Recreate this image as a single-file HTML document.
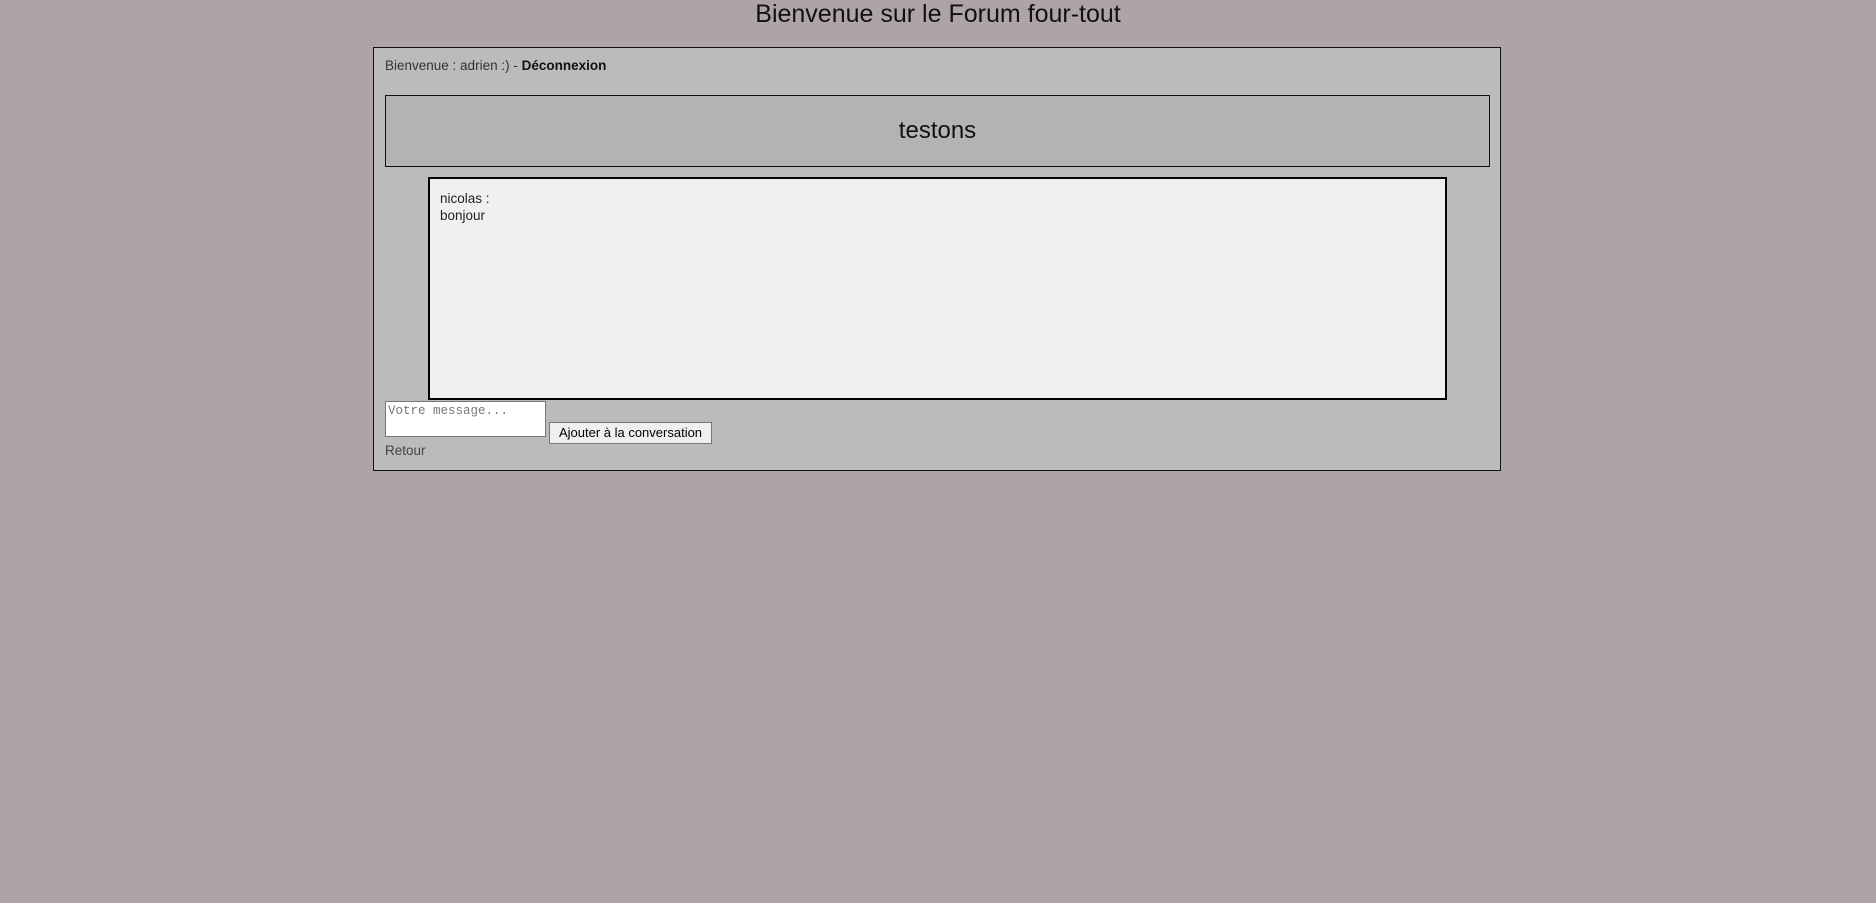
<!DOCTYPE html>
<html><head><meta charset="utf-8"><style>
body{margin:0;background:#aea4a7;font-family:"Liberation Sans",sans-serif;width:1876px;height:903px;position:relative;overflow:hidden}
.a{position:absolute}
h1{position:absolute;left:0;width:1876px;top:-1px;margin:0;text-align:center;font-size:25px;font-weight:normal;color:#111;line-height:30px}
#c{left:373px;top:47px;width:1126px;height:422px;border:1px solid #111;background:#bbbbbb}
</style></head><body>
<h1>Bienvenue sur le Forum four-tout</h1>
<div id="c" class="a"></div>
<div class="a" style="left:385px;top:58px;font-size:13.5px;color:#333">Bienvenue : adrien :) - <b style="color:#111">Déconnexion</b></div>
<div class="a" style="left:385px;top:95px;width:1103px;height:70px;border:1px solid #111;background:#b3b3b3;text-align:center;line-height:70px;font-size:24px;color:#111">testons</div>
<div class="a" style="left:428px;top:177px;width:1015px;height:219px;border:2px solid #000;background:#f0f0f0;font-size:13.5px;color:#222;line-height:17px"><div style="padding:11px 10px">nicolas :<br>bonjour</div></div>
<div class="a" style="box-sizing:border-box;left:385px;top:401px;width:161px;height:36px;border:1px solid #777;background:#fff;font-family:'Liberation Mono',monospace;font-size:12.5px;color:#777;padding:2px 2px">Votre message...</div>
<div class="a" style="left:549px;top:422px;width:161px;height:20px;border:1px solid #777;background:#efefef;font-size:13px;text-align:center;line-height:20px;color:#000">Ajouter à la conversation</div>
<div class="a" style="left:385px;top:443px;font-size:13.5px;color:#444">Retour</div>
</body></html>
